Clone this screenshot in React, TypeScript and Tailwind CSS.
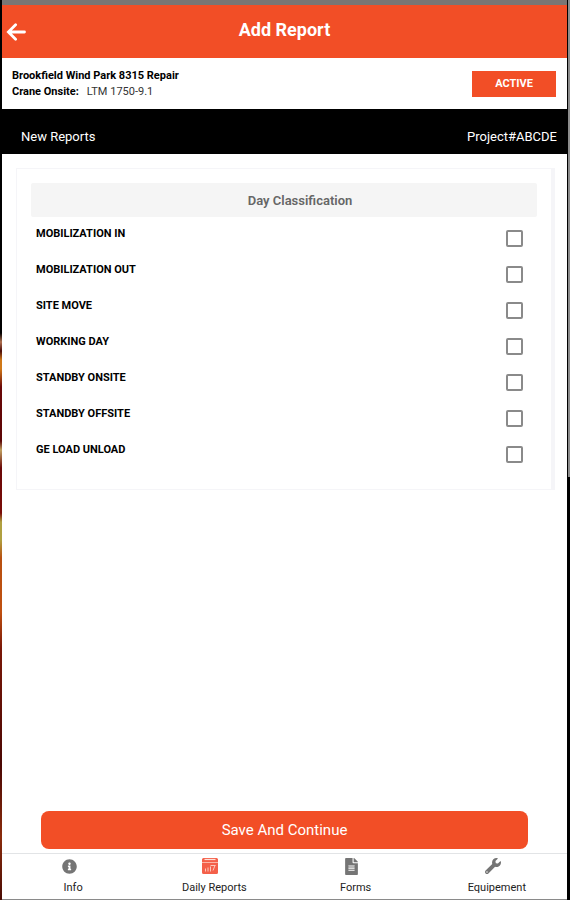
import { useState } from "react";
import type { ReactNode } from "react";
import clsx from "clsx";
import { FaFileAlt, FaInfoCircle, FaWrench } from "react-icons/fa";

const dayTypes = [
  "MOBILIZATION IN",
  "MOBILIZATION OUT",
  "SITE MOVE",
  "WORKING DAY",
  "STANDBY ONSITE",
  "STANDBY OFFSITE",
  "GE LOAD UNLOAD"
];

function BackArrow() {
  return (
    <svg width="20" height="18" viewBox="0 0 20 18" fill="none" stroke="currentColor" strokeWidth="2.8" strokeLinecap="round">
      <path d="M18.500 9H2.800M9.600 1.800 2.400 9l7.200 7.200" />
    </svg>
  );
}

function ReportIcon() {
  return (
    <svg width="18" height="18" viewBox="0 0 18 18">
      <path d="M2.500 1h13A1.500 1.500 0 0 1 17 2.500v13a1.500 1.500 0 0 1-1.500 1.500h-13A1.500 1.500 0 0 1 1 15.500v-13A1.500 1.500 0 0 1 2.500 1z" fill="#f4604a" />
      <path d="M3.500 2.500h11" stroke="#fde0d8" strokeWidth="1.200" />
      <path d="M1 5.500h16" stroke="#fbb5a6" strokeWidth="1" />
      <path d="M4.500 14.500v-3M7 14.500v-4M9.500 14.500v-5M9.500 8.500h5M14 8.500l-2 5" stroke="#fcc9bd" strokeWidth="1" fill="none" />
    </svg>
  );
}

function DayRow({ label }: { label: string }) {
  const [checked, setChecked] = useState(false);

  return (
    <label className="flex h-9 items-start justify-between pr-[14px] pl-[5px]">
      <span className="text-[11px] leading-4 font-bold text-black">{label}</span>
      <input
        type="checkbox"
        checked={checked}
        onChange={(event) => setChecked(event.target.checked)}
        className="mt-1 size-[17px] appearance-none rounded-[2px] border-2 border-[#8a8a8a] bg-white checked:bg-[#f24e26]"
      />
    </label>
  );
}

function NavItem({ label, active, children }: { label: string; active?: boolean; children: ReactNode }) {
  return (
    <a href="#" className="flex flex-col items-center pt-[3px] pl-px text-[11px] leading-4 text-[#222]">
      <span className={clsx("flex h-[18px] items-center pr-2", active ? "text-[#f4604a]" : "text-[#757575]")}>
        {children}
      </span>
      <span className="mt-[5px]">{label}</span>
    </a>
  );
}

export default function App() {
  return (
    <div className="flex min-h-screen bg-black font-['Roboto','Liberation_Sans',sans-serif]">
      <div className="w-[2px] bg-[linear-gradient(to_bottom,#000_37%,#b07050_38%,#4a0c08_39%,#d07818_40%,#d07818_41%,#6a0808_43%,#5c0606_49%,#c0a060_50%,#6a0808_52%,#7a0c08_57%,#b0a040_58%,#b0a040_60%,#b85010_62%,#c05010_68%,#7a1808_72%,#4a0804_85%,#8a2c0c_93%,#4a0c04_100%)]" />

      <div className="flex flex-1 flex-col border-b border-[#8a8a8a] bg-white">
        <div className="h-[5px] bg-[#797674]" />
        <header className="grid h-[53px] grid-cols-[1fr_auto_1fr] items-center bg-[#f24e26] px-1 text-white">
          <button type="button" aria-label="Back" className="mt-px justify-self-start">
            <BackArrow />
          </button>
          <h1 className="pb-1 text-lg font-bold">Add Report</h1>
        </header>

        <div className="flex h-[51px] items-center justify-between pr-[11px] pl-[10px] text-[11px] leading-4 text-black">
          <div>
            <p className="font-bold">Brookfield Wind Park 8315 Repair</p>
            <p>
              <span className="mr-2 font-bold">Crane Onsite:</span>
              <span className="text-[#333]">LTM 1750-9.1</span>
            </p>
          </div>
          <button type="button" className="h-[26px] w-[84px] bg-[#f24e26] pt-px font-bold text-white">
            ACTIVE
          </button>
        </div>

        <div className="flex h-[45px] items-end justify-between bg-black pr-[10px] pb-[7px] pl-[19px] text-[13px] leading-5 text-white">
          <h2>New Reports</h2>
          <span>Project#ABCDE</span>
        </div>

        <main className="flex flex-1 flex-col">
          <section className="mr-[12px] ml-[14px] mt-[14px] border border-r-4 border-[#f5f5f8] px-[14px] pt-[14px] pb-[11px]">
            <h3 className="mb-[9px] rounded-[2px] bg-[#f5f5f5] pt-2 pb-[6px] pl-8 text-center text-[13px] leading-5 font-semibold text-[#666]">
              Day Classification
            </h3>
            {dayTypes.map((label) => (
              <DayRow key={label} label={label} />
            ))}
          </section>

          <div className="mt-auto px-[39px] pb-1">
            <button type="button" className="h-[38px] w-full rounded-lg bg-[#f24e26] pt-px text-[15px] text-white">
              Save And Continue
            </button>
          </div>
        </main>

        <nav className="grid h-[46px] grid-cols-4 border-t border-[#e2e4e6]">
          <NavItem label="Info">
            <FaInfoCircle size={15} />
          </NavItem>
          <NavItem label="Daily Reports" active>
            <ReportIcon />
          </NavItem>
          <NavItem label="Forms">
            <FaFileAlt size={17} />
          </NavItem>
          <NavItem label="Equipement">
            <FaWrench size={16} />
          </NavItem>
        </nav>
      </div>

      <div className="flex w-[3px] flex-col pl-px">
        <div className="h-[53%] bg-[#8c8c8c]" />
      </div>
    </div>
  );
}
